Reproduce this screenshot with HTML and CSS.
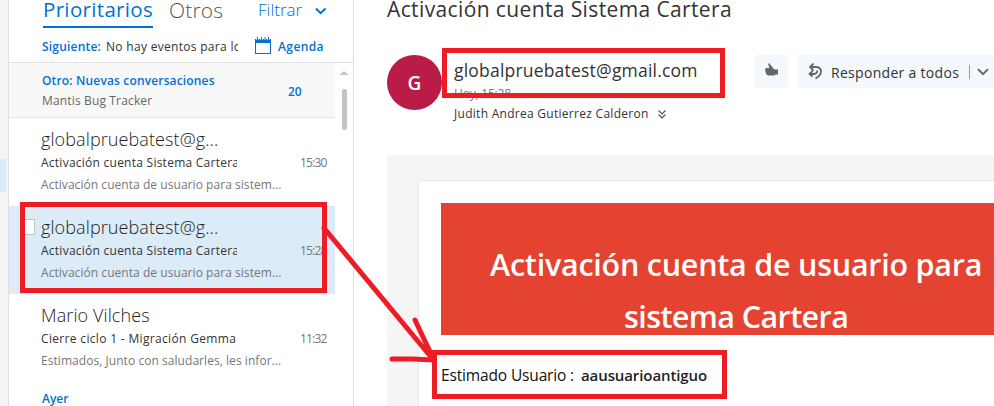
FILE: index.html
```
<!DOCTYPE html>
<html lang="es">
<head>
<meta charset="utf-8">
<title>Correo</title>
<link rel="stylesheet" href="styles.css">
</head>
<body>
<div class="app">
  <div class="rail"><div class="rail-selected"></div></div>
  <section class="list">
    <header class="list-head">
      <div class="tabs">
        <span class="tab active"><span class="t-prior">Prioritarios</span></span>
        <span class="tab other"><span class="t-otros">Otros</span></span>
        <span class="filter"><span class="t-filtrar">Filtrar</span><svg width="12" height="8" viewBox="0 0 12 8"><path d="M1 1.5l4.7 4.7L10.500 1.500" fill="none" stroke="#0072cf" stroke-width="2"/></svg></span>
      </div>
      <div class="agenda">
        <span class="next"><b class="t-sig">Siguiente:</b><span class="t-no">No hay eventos para lo</span></span>
        <svg width="16" height="17" viewBox="0 0 16 17"><path d="M0 2h16v15H0zM1 6v10h14V6z" fill="#0072cf" fill-rule="evenodd"/><path d="M2.500 0v3M6.300 0v3M10 0v3M13.500 0v3" stroke="#fff" stroke-width="2.200"/><path d="M2.500 0v3M6.300 0v3M10 0v3M13.500 0v3" stroke="#0072cf"/></svg>
        <b class="t-agenda">Agenda</b>
      </div>
    </header>
    <div class="list-body">
      <div class="rows">
        <div class="group">
          <div><div class="group-title"><span class="t-otro">Otro: Nuevas conversaciones</span></div><div class="group-sub"><span class="t-mantis">Mantis Bug Tracker</span></div></div>
          <span class="count">20</span>
        </div>
        <article class="msg">
          <div class="sender"><span class="t-sender">globalpruebatest@g...</span></div>
          <div class="line"><span class="subject"><span class="t-subj">Activación cuenta Sistema Cartera</span></span><time>15:30</time></div>
          <div class="preview"><span class="t-prev">Activación cuenta de usuario para sistem...</span></div>
        </article>
        <article class="msg selected">
          <i class="check"></i>
          <div class="sender"><span class="t-sender">globalpruebatest@g...</span></div>
          <div class="line"><span class="subject"><span class="t-subj">Activación cuenta Sistema Cartera</span></span><time>15:28</time></div>
          <div class="preview"><span class="t-prev">Activación cuenta de usuario para sistem...</span></div>
        </article>
        <article class="msg">
          <div class="sender"><span class="t-mario">Mario Vilches</span></div>
          <div class="line"><span class="subject"><span class="t-cierre">Cierre ciclo 1 - Migración Gemma</span></span><time>11:32</time></div>
          <div class="preview"><span class="t-prev">Estimados, Junto con saludarles, les infor...</span></div>
        </article>
        <div class="day">Ayer</div>
      </div>
      <div class="scroll"><i class="up"></i><i class="thumb"></i></div>
    </div>
  </section>
  <main class="reader">
    <h1><span class="t-title">Activación cuenta Sistema Cartera</span></h1>
    <div class="meta">
      <div class="avatar">G</div>
      <div class="who">
        <div class="email"><span class="t-email">globalpruebatest@gmail.com</span></div>
        <div class="date">Hoy, 15:28</div>
        <div class="to"><span class="t-judith">Judith Andrea Gutierrez Calderon</span><svg width="8" height="9" viewBox="0 0 8 9"><path d="M.5.5L4 4 7.500.5M.5 4.500L4 8l3.500-3.500" fill="none" stroke="#555" stroke-width="1.200"/></svg></div>
      </div>
      <div class="actions">
        <span class="btn like"><svg width="14" height="13" viewBox="0 0 14 13"><path d="M0 6.500Q0 5 1.500 5H4.500L3.200 1.200Q3.200 0 4.200.2L8.200 5.200 9.500 6.500H13V11.500H10.500L9.500 12.500H3.500Q1.500 12.500 1 10.500Z" fill="#666"/></svg></span>
        <span class="btn reply"><svg width="15" height="17" viewBox="0 0 15 17"><path d="M5.500.5L2 4l3.500 3.500M2 4H8.500Q13 4.500 13 8.500 13 12.500 7.500 15.500M4.500 8L1.500 11 4.500 13.500M1.500 11H6Q9.500 10.500 9 7.500" fill="none" stroke="#666" stroke-width="1.800"/></svg><span class="t-resp">Responder a todos</span><i class="sep"></i><svg width="12" height="8" viewBox="0 0 12 8"><path d="M1 1.200l5 5 5-5" fill="none" stroke="#666" stroke-width="1.900"/></svg></span>
      </div>
    </div>
    <div class="mail">
      <div class="card">
        <div class="banner"><span class="t-b1">Activación cuenta de usuario para</span><span class="t-b2">sistema Cartera</span></div>
        <p class="greet"><span class="t-greet">Estimado Usuario :</span><b class="t-user">aausuarioantiguo</b></p>
      </div>
    </div>
  </main>
  <svg class="marks" width="994" height="406" viewBox="0 0 994 406" fill="none" stroke="#ee1c24" stroke-width="5">
    <path d="M22.500 204.500h302v86h-302zM444.500 50.500h278v45h-278zM434.500 352.500h290v44h-290z"/>
    <path d="M324 228L431 357M415 320L432 356M392 359H412L434 360" stroke-linecap="round"/>
  </svg>
</div>
</body>
</html>
```
FILE: styles.css
```
* { box-sizing: border-box; }
body { margin: 0; background: #fff; color: #333; font: 12px "Open Sans", "Noto Sans", sans-serif; }
b { font-weight: 600; }
svg { display: block; flex: none; }
.app { position: relative; display: flex; width: 994px; height: 406px; overflow: hidden; white-space: nowrap; }
.rail { width: 8px; background: #f4f4f4; padding-top: 159px; flex: none; }
.rail-selected { width: 6px; height: 33px; background: #dcebf8; }

.list { width: 346px; flex: none; border-left: 1px solid #dfdfdf; border-right: 1px solid #dfdfdf; }
.list-head { height: 63px; border-bottom: 1px solid #e0e0e0; }
.tabs { display: flex; height: 28px; padding-left: 34px; }
.tab { height: 28px; line-height: 18px; font-size: 20.5px; }
.tab.active { width: 110px; color: #0072cf; border-bottom: 2px solid #0072cf; font-weight: 400; letter-spacing: .33px; }
.tab.other { width: 105px; padding-left: 16px; line-height: 21px; color: #555; font-weight: 300; letter-spacing: .2px; font-size: 21px; }
.filter { display: flex; align-items: flex-start; color: #0072cf; font-size: 17px; line-height: 20px; font-weight: 300; }
.filter > span { width: 57px; }
.filter svg { margin-top: 7px; }
.agenda { display: flex; height: 34px; padding-left: 33px; line-height: 20px; padding-top: 9px; }
.agenda b, .group-title, .count, .day { color: #0072cf; font-weight: 600; }
.next { width: 196px; overflow: hidden; display: flex; }
.next b { width: 64px; flex: none; }
.t-sig { letter-spacing: .2px; }
.t-no { letter-spacing: .3px; }
.t-agenda { letter-spacing: .4px; }
.agenda svg { margin: 0 7px 0 17px; }

.list-body { display: flex; }
.rows { width: 326px; }
.group { display: flex; height: 55px; padding: 8px 0 0 33px; background: #f8f8f8; border-bottom: 1px solid #e4e4e4; }
.group > div { width: 246px; }
.group-title, .group-sub { line-height: 20px; letter-spacing: .15px; }
.group-sub { color: #666; }
.count { line-height: 42px; }
.msg { position: relative; height: 88px; padding: 9px 0 0 32px; }
.selected { background: #dcebf8; }
.check { position: absolute; left: 12px; top: 13px; width: 14px; height: 16px; background: #fff; border: 1px solid #c4c4c4; }
.sender { font-size: 18px; line-height: 24px; height: 26px; font-weight: 300; letter-spacing: .1px; color: #222; }
.line { display: flex; line-height: 20px; }
.subject { width: 196px; overflow: hidden; }
.t-subj { letter-spacing: .25px; }
.t-cierre { letter-spacing: .33px; }
.line time { margin-left: 63px; color: #777; letter-spacing: -.8px; }
.preview { line-height: 24px; color: #777; letter-spacing: .05px; }
.day { padding: 7px 0 0 33px; line-height: 20px; }
.scroll { width: 18px; padding: 8px 0 0 4px; }
.scroll i { display: block; }
.up { border: 5px solid transparent; border-top: 0; border-bottom: 4px solid #c8c8c8; width: 0; }
.thumb { width: 5px; height: 41px; margin: 14px 0 0 3px; background: #c4c4c4; border-radius: 2px; }

.reader { flex: 1; min-width: 0; padding-left: 34px; overflow: hidden; margin-left: -1px; }
h1 { margin: 0; height: 55px; font-size: 21px; line-height: 18px; font-weight: 400; letter-spacing: .38px; }
.meta { display: flex; height: 100px; }
.avatar { flex: none; width: 55px; height: 55px; border-radius: 50%; background: #b91c47; color: #fff; font-size: 19px; line-height: 56px; text-align: center; font-weight: 600; }
.who { flex: none; width: 313px; padding-left: 12px; }
.email { height: 29px; font-size: 17.5px; line-height: 31px; letter-spacing: .2px; }
.date { color: #777; line-height: 20px; letter-spacing: -.2px; }
.to { display: flex; line-height: 20px; letter-spacing: .28px; }
.to svg { margin: 6px 0 0 9px; }
.actions { display: flex; gap: 10px; }
.btn { display: flex; flex: none; height: 33px; background: #f3f8fd; font-size: 14px; }
.like { width: 33px; padding: 8px 0 0 10px; }
.reply { width: 210px; padding-left: 10px; line-height: 35px; }
.reply > svg:first-child { margin: 8px 8px 0 0; }
.t-resp { width: 138px; letter-spacing: .3px; }
.sep { width: 1px; height: 14px; margin: 10px 7px 0 0; background: #999; }
.sep + svg { margin-top: 13px; }
.mail { height: 251px; background: #f5f5f5; padding: 25px 0 0 31px; }
.card { height: 260px; background: #fff; border: 1px solid #e8e8e8; border-right: 0; border-radius: 3px 0 0 0; padding: 22px 0 0 22px; }
.banner { display: flex; flex-direction: column; height: 132px; background: #e44332; color: #fff; font-size: 30.5px; line-height: 52px; font-weight: 600; letter-spacing: -.6px; padding-top: 35px; }
.t-b1 { padding-left: 49px; letter-spacing: -.24px; }
.t-b2 { padding-left: 183px; }
.greet { display: flex; margin: 26px 0 0; font-size: 16px; line-height: 28px; color: #111; }
.t-greet { width: 140px; font-size: 15.5px; letter-spacing: -.15px; }
.t-user { color: #222; font-size: 15px; letter-spacing: -.1px; }
.marks { position: absolute; left: 0; top: 0; }
```
